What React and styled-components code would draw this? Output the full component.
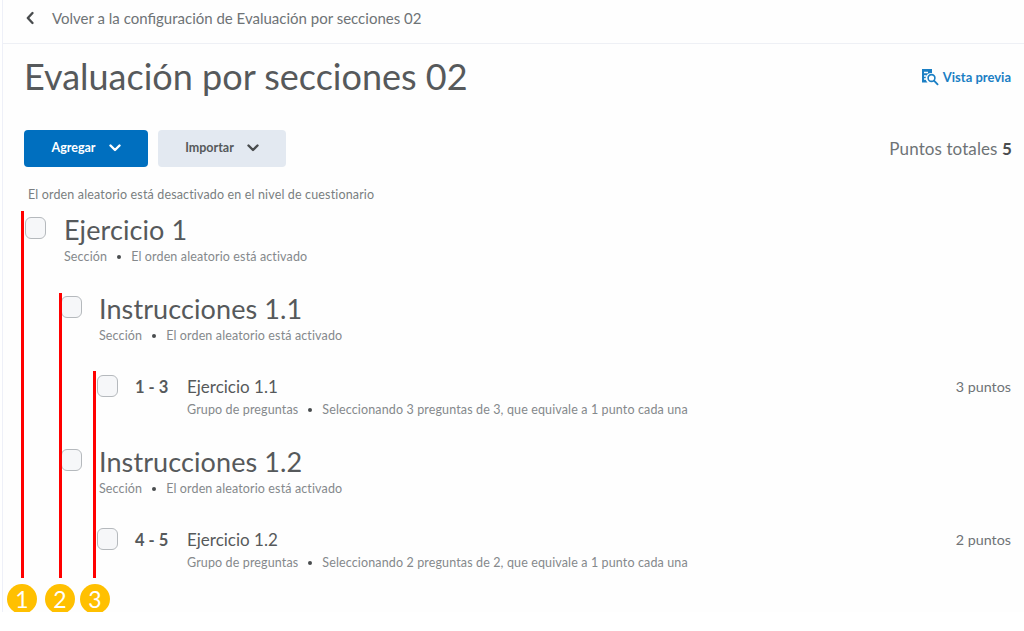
import styled, { createGlobalStyle } from "styled-components";

const GlobalStyle = createGlobalStyle`
    html, body{
        margin: 0;
        padding: 0;
        background-color: #ffffff;
    }
    body{
        font-family: "Lato", "Open Sans", sans-serif;
        color: #494c4e;
    }
`

const sections = [
    { type: 'section', level: 0, title: 'Ejercicio 1', height: 79 },
    { type: 'section', level: 1, title: 'Instrucciones 1.1', height: 79 },
    { type: 'item', range: '1 - 3', title: 'Ejercicio 1.1', points: '3 puntos', total: 3, height: 74 },
    { type: 'section', level: 1, title: 'Instrucciones 1.2', height: 79 },
    { type: 'item', range: '4 - 5', title: 'Ejercicio 1.2', points: '2 puntos', total: 2, height: 74 },
]

function Chevron({ color }){
    return (
        <svg width="12" height="8" viewBox="0 0 12 8" fill="none">
            <path d="M1.5 1.5 L6 6 L10.5 1.5" stroke={color} strokeWidth="2.4" strokeLinecap="round" strokeLinejoin="round" />
        </svg>
    )
}

function PreviewIcon(){
    return (
        <svg width="18" height="18" viewBox="0 0 18 18" fill="none">
            <path d="M1 1 H11 V5 A5.5 5.5 0 0 0 6.5 14.5 H1 Z" fill="#1b7fc4" />
            <path d="M3 4.5 H7 M3 8 H5.5 M3 11 H5.5" stroke="#ffffff" strokeWidth="1.3" />
            <circle cx="10.5" cy="10" r="3.4" stroke="#1b7fc4" strokeWidth="1.6" />
            <path d="M13 12.6 L16.6 16.4" stroke="#1b7fc4" strokeWidth="1.8" strokeLinecap="round" />
        </svg>
    )
}

export default function App(){
    return <>
        <GlobalStyle />
        <Page>
            <BackBar>
                <svg width="10" height="14" viewBox="0 0 10 14" fill="none">
                    <path d="M7.5 2 L2.8 7 L7.5 12" stroke="#494c4e" strokeWidth="2.4" strokeLinecap="round" strokeLinejoin="round" />
                </svg>
                <BackText>Volver a la configuración de Evaluación por secciones 02</BackText>
            </BackBar>
            <TitleRow>
                <Title>Evaluación por secciones 02</Title>
                <PreviewLink><PreviewIcon />Vista previa</PreviewLink>
            </TitleRow>
            <Toolbar>
                <Buttons>
                    <Button $primary>Agregar <Chevron color="#ffffff" /></Button>
                    <Button>Importar <Chevron color="#494c4e" /></Button>
                </Buttons>
                <Total>Puntos totales <b>5</b></Total>
            </Toolbar>
            <Note>El orden aleatorio está desactivado en el nivel de cuestionario</Note>
            <List>
                {sections.map((s) => s.type === 'section' ? (
                    <SectionRow key={s.title} $level={s.level} $height={s.height}>
                        <Check />
                        <div>
                            <SectionTitle>{s.title}</SectionTitle>
                            <Meta>Sección<Dot />El orden aleatorio está activado</Meta>
                        </div>
                    </SectionRow>
                ) : (
                    <ItemRow key={s.title} $height={s.height}>
                        <Check />
                        <Range>{s.range}</Range>
                        <div>
                            <ItemTitle>{s.title}</ItemTitle>
                            <Meta>Grupo de preguntas<Dot />Seleccionando {s.total} preguntas de {s.total}, que equivale a 1 punto cada una</Meta>
                        </div>
                        <Points>{s.points}</Points>
                    </ItemRow>
                ))}
            </List>

            <Marker $x={21} $top={211} $height={367} />
            <Marker $x={59} $top={293} $height={285} />
            <Marker $x={93} $top={371} $height={207} />
            <Badge $x={22}>1</Badge>
            <Badge $x={60}>2</Badge>
            <Badge $x={95}>3</Badge>
        </Page>
    </>
}

const Page = styled.div`
    position: relative;
    box-sizing: border-box;
    width: 1022px;
    height: 612px;
    margin-left: 2px;
    background-color: #fefefe;
    border-left: 1px solid #eef0f8;
`
const BackBar = styled.div`
    box-sizing: border-box;
    height: 44px;
    display: flex;
    align-items: center;
    gap: 17px;
    padding: 0 0 8px 22px;
    border-bottom: 1px solid #eef0f5;
`
const BackText = styled.span`
    font-size: 15px;
    color: #6e7376;
`
const TitleRow = styled.div`
    display: flex;
    align-items: center;
    justify-content: space-between;
    height: 64px;
    padding: 0 13px 2px 21px;
`
const Title = styled.h1`
    margin: 0;
    font-size: 36px;
    font-weight: 400;
    color: #56595b;
`
const PreviewLink = styled.div`
    display: flex;
    align-items: center;
    gap: 4px;
    margin-top: 2px;
    font-size: 13px;
    font-weight: 700;
    color: #1b7fc4;
`
const Toolbar = styled.div`
    display: flex;
    align-items: center;
    justify-content: space-between;
    height: 37px;
    margin-top: 20px;
    padding: 0 12px 0 21px;
`
const Buttons = styled.div`
    display: flex;
    gap: 10px;
`
const Button = styled.button`
    display: flex;
    align-items: center;
    justify-content: center;
    gap: 13px;
    width: ${(props) => props.$primary ? '124px' : '128px'};
    height: 37px;
    padding: 0 0 2px;
    border: 0;
    border-radius: 4px;
    font-family: inherit;
    font-size: 12.5px;
    font-weight: 700;
    color: ${(props) => props.$primary ? '#ffffff' : '#56595b'};
    background-color: ${(props) => props.$primary ? '#006fbf' : '#e3e9f1'};
`
const Total = styled.div`
    font-size: 17px;
    letter-spacing: 0.1px;
    color: #6e7376;
    b{
        color: #494c4e;
    }
`
const Note = styled.div`
    margin: 19px 0 0 25px;
    height: 17px;
    font-size: 12.5px;
    line-height: 17px;
    letter-spacing: 0.15px;
    color: #7a7e81;
`
const List = styled.div`
    display: flex;
    flex-direction: column;
    margin-top: 14px;
`
const SectionRow = styled.div`
    display: flex;
    box-sizing: border-box;
    height: ${(props) => props.$height}px;
    padding-left: ${(props) => props.$level === 0 ? 22 : 58}px;
    gap: ${(props) => props.$level === 0 ? 18 : 17}px;
`
const Check = styled.div`
    flex: none;
    box-sizing: border-box;
    width: 21px;
    height: 22px;
    border: 1px solid #b5b9bd;
    border-radius: 6px;
    background-color: #f6f7f9;
`
const SectionTitle = styled.div`
    margin-top: -3px;
    font-size: 27px;
    letter-spacing: 0.1px;
    line-height: 32px;
    color: #56595b;
`
const Meta = styled.div`
    display: flex;
    align-items: center;
    margin-top: 2px;
    font-size: 12.5px;
    line-height: 18px;
    letter-spacing: 0.13px;
    color: #85898c;
`
const Dot = styled.span`
    width: 4px;
    height: 4px;
    margin: 0 10px;
    border-radius: 50%;
    background-color: #494c4e;
`
const ItemRow = styled.div`
    display: flex;
    box-sizing: border-box;
    height: ${(props) => props.$height}px;
    padding: 0 13px 0 94px;
`
const Range = styled.div`
    width: 52px;
    margin-left: 17px;
    font-size: 16.5px;
    font-weight: 700;
    line-height: 24px;
    color: #56595b;
`
const ItemTitle = styled.div`
    font-size: 17px;
    line-height: 24px;
    margin-bottom: 2px;
    color: #56595b;
`
const Points = styled.div`
    margin-left: auto;
    font-size: 14.3px;
    line-height: 24px;
    color: #6e7376;
`
const Marker = styled.div`
    position: absolute;
    left: ${(props) => props.$x - 3}px;
    top: ${(props) => props.$top}px;
    width: 3px;
    height: ${(props) => props.$height}px;
    background-color: #ff0000;
`
const Badge = styled.div`
    position: absolute;
    left: ${(props) => props.$x - 18}px;
    top: 584px;
    width: 30px;
    height: 30px;
    display: flex;
    align-items: center;
    justify-content: center;
    border-radius: 50%;
    font-size: 23px;
    color: #ffffff;
    background-color: #ffc000;
    &::after{
        content: "";
        position: absolute;
        left: 7px;
        top: 28px;
        box-sizing: border-box;
        width: 17px;
        height: 1px;
        border-left: 2px solid #666666;
        border-right: 2px solid #666666;
    }
`
